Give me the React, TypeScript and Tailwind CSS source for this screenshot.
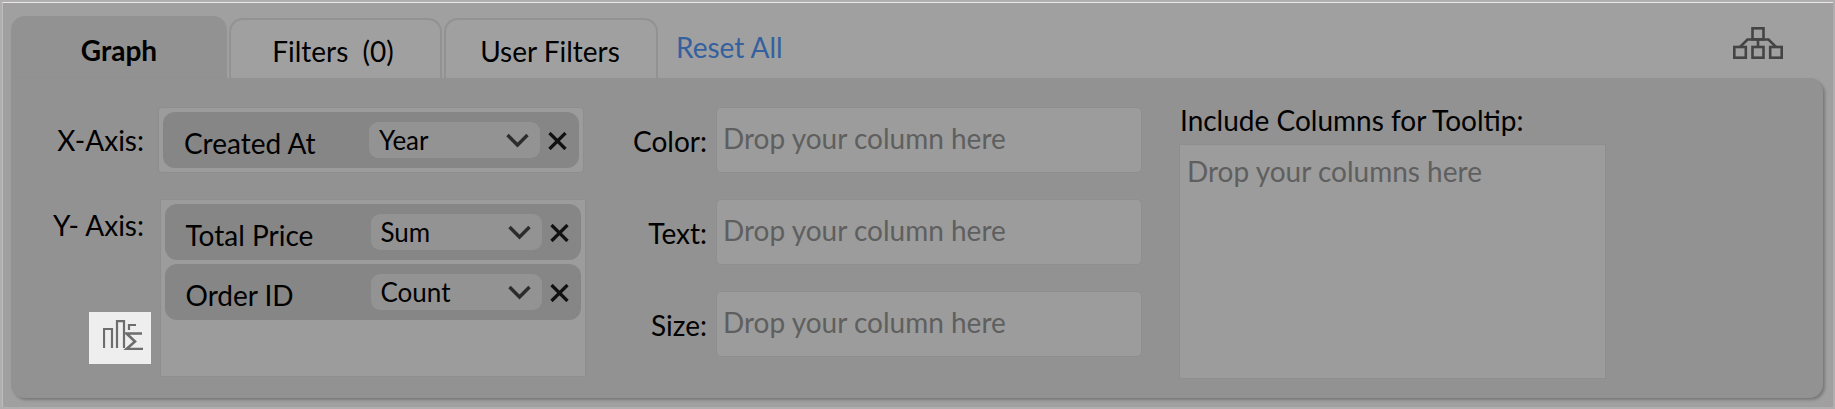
const font = { fontFamily: 'Lato, "Open Sans", sans-serif' };

function Chevron() {
  return (
    <svg width="23" height="15" viewBox="0 0 23 15" fill="none" stroke="#2c2c2c" strokeWidth="3.4">
      <path d="M1.5 2 L11.5 12 L21.5 2" />
    </svg>
  );
}

function Cross() {
  return (
    <svg className="mt-[1px] shrink-0" width="19" height="18" viewBox="0 0 19 18" fill="none" stroke="#111" strokeWidth="3.3">
      <path d="M1.5 1 L17.5 17 M17.5 1 L1.5 17" />
    </svg>
  );
}

function Chip({ name, agg }: { name: string; agg: string }) {
  return (
    <div className="flex h-[56px] w-[416px] shrink-0 items-center rounded-[12px] bg-[#868686] pl-[21px] pr-[12px]">
      <span className="mt-[6px] flex-1 text-[28px] leading-none text-black">{name}</span>
      <div className="mr-[8px] flex h-[36px] w-[171px] items-center justify-between rounded-[9px] bg-[#939393] pl-[10px] pr-[11px]">
        <span className="text-[26px] leading-none text-black">{agg}</span>
        <Chevron />
      </div>
      <Cross />
    </div>
  );
}

function DropField({ label }: { label: string }) {
  return (
    <div className="flex items-center">
      <span className="w-[121px] pr-[9px] pt-[2px] text-right text-[28px] leading-none text-black">{label}</span>
      <div className="flex h-[66px] w-[426px] items-center rounded-[5px] border border-[#8e8e8e] bg-[#9c9c9c] pl-[6px]">
        <span className="mt-[-5px] text-[28px] leading-none text-[#5f5f5f]">Drop your column here</span>
      </div>
    </div>
  );
}

function Tab({ label, className }: { label: string; className: string }) {
  return (
    <div className={`flex items-center justify-center rounded-t-[14px] text-[28px] leading-none text-black ${className}`}>
      {label}
    </div>
  );
}

export default function App() {
  return (
    <div className="h-[409px] w-[1835px] overflow-hidden bg-[#b0aeae] px-[2px] py-[2px]" style={font}>
      <div className="flex h-full flex-col border-l border-t border-l-[#bdbdbd] border-t-[#e8e8e8] bg-[#a0a0a0] pl-[8px] pr-[10px] pt-[13px]">
        {/* tabs */}
        <div className="flex h-[62px] shrink-0 items-end">
          <Tab label="Graph" className="h-[62px] w-[216px] bg-[#929292] pt-[6px] font-bold" />
          <Tab label="Filters  (0)" className="ml-[2px] h-[60px] w-[213px] whitespace-pre border-x-2 border-t-2 border-[#929292] bg-[#a0a0a0] pr-[5px] pt-[4px]" />
          <Tab label="User Filters" className="ml-[2px] h-[60px] w-[214px] border-x-2 border-t-2 border-[#929292] bg-[#a0a0a0] pr-[2px] pt-[4px]" />
          <span className="mb-[13px] ml-[18px] text-[28px] leading-[36px] text-[#35609e]">Reset All</span>
          <svg className="mb-[19px] ml-auto mr-[40px]" width="50" height="32" viewBox="0 0 50 32" fill="none" stroke="#444" strokeWidth="2.6">
            <rect x="19.5" y="1.3" width="11" height="11" />
            <rect x="1.3" y="20" width="11.5" height="10.7" />
            <rect x="19.5" y="20" width="11" height="10.7" />
            <rect x="37.2" y="20" width="11.5" height="10.7" />
            <path d="M7 20 L14.5 12.5 H35.5 L43 20 M25 12.5 V20" />
          </svg>
        </div>

        {/* panel */}
        <div className="flex h-[320px] shrink-0 items-start rounded-b-[14px] rounded-tr-[14px] bg-[#929292] pt-[29px] shadow-[2px_2px_3px_rgba(0,0,0,0.25)]">
          <div className="flex w-[574px] shrink-0">
            <div className="flex w-[147px] shrink-0 flex-col items-end">
              <span className="mt-[19px] pr-[14px] text-[28px] leading-none text-black">X-Axis:</span>
              <span className="mt-[57px] pr-[14px] text-[28px] leading-none text-black">Y- Axis:</span>
              <div className="mr-[7px] mt-[73px] flex h-[52px] w-[62px] items-start bg-[#eeeeee] pl-[14px] pt-[8px]">
                <svg width="40" height="30" viewBox="0 0 40 30" fill="none" stroke="#6d6d6d" strokeWidth="2.2">
                  <path d="M1 28 V9 H9 V28" />
                  <path d="M14 28 V1.2 H21 V28" />
                  <path d="M26 10 V5 H33" />
                  <path d="M39 13.5 H23.5 L32 21.5 L23.5 29 H40" strokeWidth="2.6" />
                </svg>
              </div>
            </div>
            <div className="flex flex-col">
              <div className="flex h-[66px] w-[426px] items-center justify-center rounded-[4px] border border-[#8e8e8e] bg-[#9c9c9c]">
                <Chip name="Created At" agg="Year" />
              </div>
              <div className="ml-[1.5px] mt-[26px] flex h-[178px] w-[426px] flex-col items-center gap-[4px] border border-[#8e8e8e] bg-[#9c9c9c] pt-[4px]">
                <Chip name="Total Price" agg="Sum" />
                <Chip name="Order ID" agg="Count" />
              </div>
            </div>
          </div>

          <div className="ml-[10px] flex flex-col gap-[26px]">
            <DropField label="Color:" />
            <DropField label="Text:" />
            <DropField label="Size:" />
          </div>

          <div className="ml-[38px] mt-[-5px] flex flex-col">
            <span className="text-[28px] leading-[36px] text-black">Include Columns for Tooltip:</span>
            <div className="ml-[-1px] mt-[6px] h-[235px] w-[427px] border border-[#8e8e8e] bg-[#9c9c9c] pl-[7px] pt-[12px]">
              <span className="block text-[28px] leading-none text-[#5f5f5f]">Drop your columns here</span>
            </div>
          </div>
        </div>
      </div>
    </div>
  );
}
